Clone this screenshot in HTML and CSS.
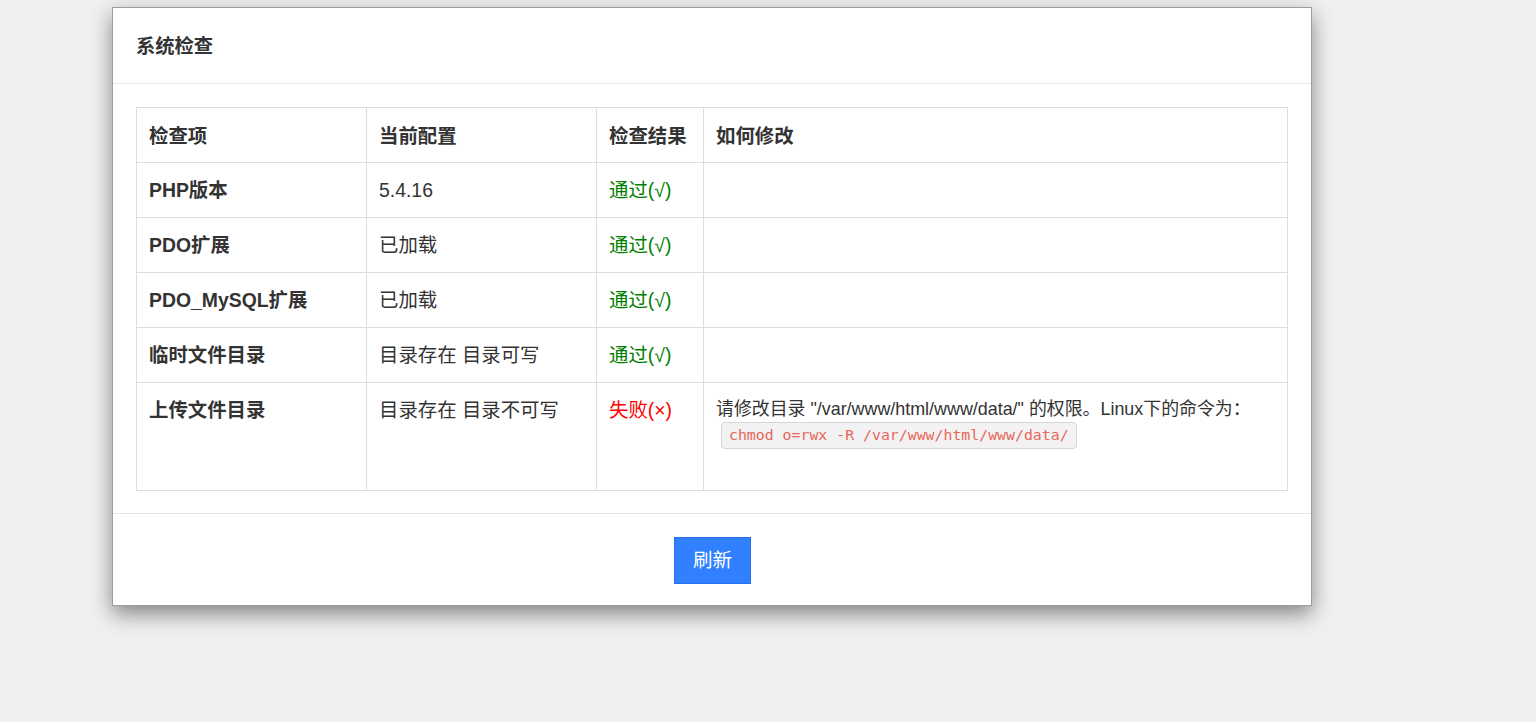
FILE: index.html
```html
<!DOCTYPE html>
<html lang="zh-CN">
<head>
<meta charset="utf-8">
<title>系统检查</title>
<link rel="stylesheet" href="styles.css">
</head>
<body>
<div class="modal">
  <div class="modal-header">
    <h4 class="modal-title">系统检查</h4>
  </div>
  <div class="modal-body">
    <table class="check-table">
      <colgroup>
        <col class="c1"><col class="c2"><col class="c3"><col class="c4">
      </colgroup>
      <thead>
        <tr><th>检查项</th><th>当前配置</th><th>检查结果</th><th>如何修改</th></tr>
      </thead>
      <tbody>
        <tr><th>PHP版本</th><td>5.4.16</td><td class="ok">通过(√)</td><td></td></tr>
        <tr><th>PDO扩展</th><td>已加载</td><td class="ok">通过(√)</td><td></td></tr>
        <tr><th>PDO_MySQL扩展</th><td>已加载</td><td class="ok">通过(√)</td><td></td></tr>
        <tr><th>临时文件目录</th><td>目录存在 目录可写</td><td class="ok">通过(√)</td><td></td></tr>
        <tr class="tall"><th>上传文件目录</th><td>目录存在 目录不可写</td><td class="fail">失败(×)</td>
          <td class="fix"><div class="fix-inner">请修改目录 "/var/www/html/www/data/" 的权限。Linux下的命令为：<br><code>chmod o=rwx -R /var/www/html/www/data/</code></div></td></tr>
      </tbody>
    </table>
  </div>
  <div class="modal-footer">
    <button class="btn" type="button">刷新</button>
  </div>
</div>
</body>
</html>
```
FILE: styles.css
```css
html, body {
  margin: 0;
  padding: 0;
}
body {
  background: #f0f0f0;
  font-family: "Liberation Sans", Arial, "Noto Sans CJK SC", sans-serif;
  color: #333;
  font-size: 16px;
  line-height: 1.42857;
  height: 722px;
  overflow: hidden;
}
.modal {
  box-sizing: border-box;
  width: 1200px;
  margin: 7px 0 0 112px;
  background: #fff;
  border: 1px solid rgba(0, 0, 0, 0.38);
  box-shadow: 0 8px 20px rgba(0, 0, 0, 0.45);
}
.modal-header {
  height: 75px;
  padding: 0 23px;
  display: flex;
  align-items: center;
  border-bottom: 1px solid #e5e5e5;
}
.modal-title {
  margin: 0;
  font-size: 19.3px;
  font-weight: bold;
  line-height: 26px;
  padding-top: 2px;
}
.modal-body {
  padding: 23px 23px 22px;
}
.check-table {
  width: 100%;
  border-collapse: collapse;
  table-layout: fixed;
}
.c1 { width: 230px; }
.c2 { width: 230px; }
.c3 { width: 107px; }
.check-table th,
.check-table td {
  border: 1px solid #ddd;
  padding: 15px 12px;
  font-size: 19.4px;
  line-height: 24px;
  text-align: left;
  vertical-align: top;
}
.check-table thead th {
  padding-top: 16px;
  padding-bottom: 14px;
}
.check-table th {
  font-weight: bold;
}
.check-table td {
  font-weight: normal;
}
.ok { color: #008000; }
.fail { color: #ff0000; }
.check-table td.fix {
  font-size: 17.9px;
  line-height: 22.86px;
}
.fix-inner {
  min-height: 77px;
}
code {
  display: inline-block;
  margin: 1px 0 0 5px;
  padding: 3px 7px;
  font-family: "DejaVu Sans Mono", "Liberation Mono", monospace;
  font-size: 14.85px;
  line-height: 19px;
  color: #e8665a;
  background: #f2f2f2;
  border: 1px solid #d6d6d6;
  border-radius: 4px;
}
.modal-footer {
  border-top: 1px solid #e5e5e5;
  padding: 23px 0 21px;
  display: flex;
  justify-content: center;
}
.btn {
  width: 77px;
  height: 47px;
  margin-left: 1px;
  background: #3080ff;
  border: 1px solid #2a6fe6;
  border-radius: 0;
  color: #fff;
  font-family: "Liberation Sans", Arial, "Noto Sans CJK SC", sans-serif;
  font-size: 19.5px;
  line-height: 25px;
  padding: 0;
}
```
